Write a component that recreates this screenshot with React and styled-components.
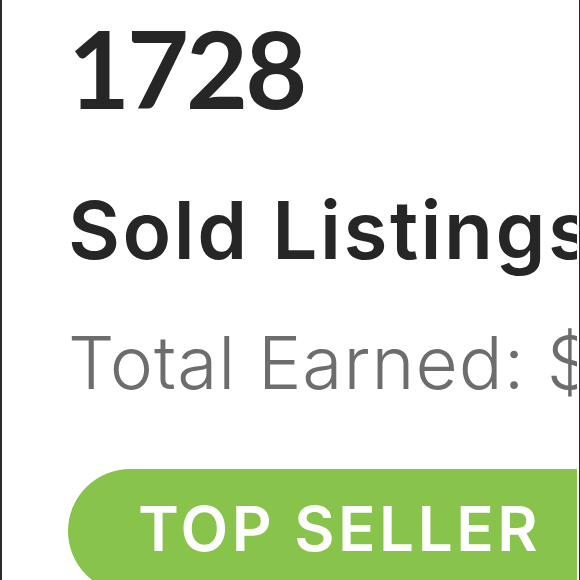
import styled, { createGlobalStyle } from 'styled-components';

const GlobalStyle = createGlobalStyle`
  * {
    margin: 0;
    padding: 0;
    box-sizing: border-box;
  }
  body {
    background: #ffffff;
    font-family: 'Inter', 'Liberation Sans', sans-serif;
  }
`;

const Frame = styled.main`
  width: 580px;
  height: 580px;
  border-left: 2px solid #2b2b2b;
  border-right: 1px solid #2b2b2b;
  padding-right: 2px;
  background: #ffffff;
`;

const Card = styled.section`
  height: 100%;
  overflow: hidden;
  display: flex;
  flex-direction: column;
  align-items: flex-start;
  padding: 14px 0 0 66px;
`;

const Count = styled.h1`
  font-family: 'Lato', 'Liberation Sans', sans-serif;
  font-size: 107px;
  line-height: 1;
  font-weight: 700;
  letter-spacing: -3px;
  color: #262626;
`;

const Label = styled.h2`
  margin-top: 69px;
  font-size: 80px;
  line-height: 1;
  font-weight: 600;
  letter-spacing: 2.5px;
  color: #262626;
  white-space: nowrap;
`;

const Earned = styled.p`
  margin-top: 56px;
  font-size: 73px;
  line-height: 1;
  font-weight: 300;
  letter-spacing: 1px;
  color: #6d6d6d;
  white-space: nowrap;
`;

const Badge = styled.div`
  margin-top: 70px;
  flex-shrink: 0;
  width: 640px;
  height: 124px;
  border-radius: 62px;
  background: #88c34b;
  color: #ffffff;
  padding: 29px 0 0 70px;
  font-size: 62px;
  line-height: 1;
  font-weight: 600;
  letter-spacing: 3.5px;
  white-space: nowrap;
`;

export default function App() {
  return (
    <>
      <GlobalStyle />
      <Frame>
        <Card>
          <Count>1728</Count>
          <Label>Sold Listings</Label>
          <Earned>Total Earned: $</Earned>
          <Badge>TOP SELLER</Badge>
        </Card>
      </Frame>
    </>
  );
}
